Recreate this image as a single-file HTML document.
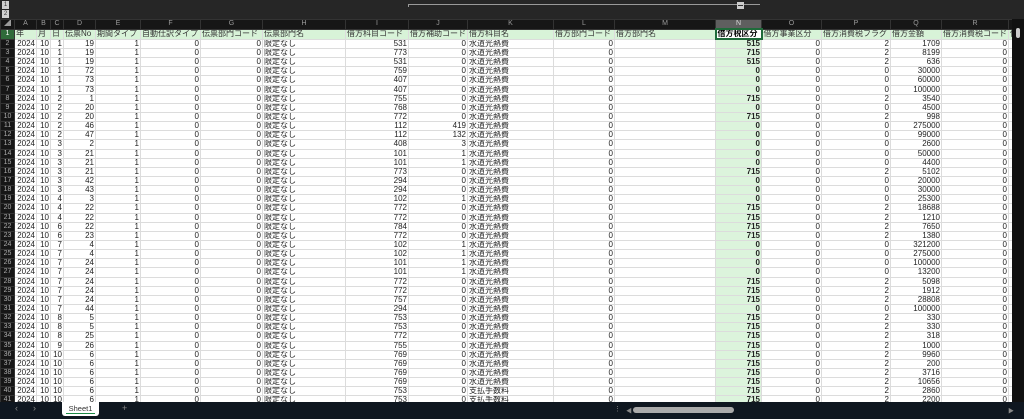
<!DOCTYPE html>
<html><head><meta charset="utf-8"><style>
*{margin:0;padding:0;box-sizing:border-box}
body{width:1024px;height:419px;overflow:hidden;background:#1f1f1f;font-family:"Liberation Sans","Noto Sans CJK JP",sans-serif;position:relative}
#top{position:absolute;left:0;top:0;width:1024px;height:19px;background:#262626}
.ob{position:absolute;left:2px;width:7px;height:8px;background:#d0d0d0;color:#333;font-size:6px;line-height:8px;text-align:center}
#line{position:absolute;left:408px;top:4px;width:352px;height:1px;background:#999}
#line2{position:absolute;left:408px;top:4px;width:1px;height:3px;background:#999}
#minus{position:absolute;left:737px;top:2px;width:7px;height:7px;background:#ccc}
#minus:after{content:"";position:absolute;left:1px;top:3px;width:5px;height:1px;background:#333}
table{position:absolute;left:0;top:19px;border-collapse:collapse;table-layout:fixed;width:1012px;font-size:8px}
td,th{border:1px solid #dcdcdc;padding:0 1px;white-space:nowrap;overflow:hidden;line-height:8px;text-align:right;color:#222;background:#fff;font-weight:normal}
tr{height:9.15px}
tr.h{height:8.5px}
tr.h th{background:#161616;color:#9a9a9a;text-align:center;border-color:#333;font-size:7px}
tr.h th.sel{background:#5f5f5f;color:#ddd}
th.r{background:#161616;color:#aaa;text-align:center;border-color:#333;font-size:7px;padding:0}
tr.f td{background:#d8f3d8;color:#333;text-align:left}
tr.f th.r{background:#2f6b3a;color:#fff}
td.l{text-align:left}
td.n{background:#dcf4dc;font-weight:bold}
tr.f td.n{background:#fff;border:2px solid #1f6b3a;font-weight:bold;color:#000}
#vs{position:absolute;left:1012px;top:19px;width:12px;height:384px;background:#111}
#vs:before{content:"";position:absolute;left:4px;top:9px;width:4px;height:10px;border-radius:2px;background:#ccc}
#bar{position:absolute;left:0;top:402px;width:1024px;height:17px;background:#0f1720}
#tab{position:absolute;left:62px;top:402px;width:37px;height:14px;background:#fff;border-radius:0 0 3px 3px;font-size:7.5px;color:#333;text-align:center;line-height:13px}
#tab:after{content:"";position:absolute;left:4px;right:4px;bottom:2px;height:1px;background:#1d8a45}
.g{position:absolute;color:#888;font-size:9px;top:403px}
#thumb{position:absolute;left:633px;top:407px;width:101px;height:6px;border-radius:3px;background:#aaa}
</style></head><body>
<div id="top"><div class="ob" style="top:1px">1</div><div class="ob" style="top:10px">2</div><div id="line"></div><div id="line2"></div><div id="minus"></div></div>
<table>
<colgroup><col style="width:14px"><col style="width:22px"><col style="width:14px"><col style="width:13px"><col style="width:32px"><col style="width:45px"><col style="width:60px"><col style="width:62px"><col style="width:83px"><col style="width:63px"><col style="width:59px"><col style="width:86px"><col style="width:61px"><col style="width:101px"><col style="width:46px"><col style="width:60px"><col style="width:69px"><col style="width:51px"><col style="width:67px"><col style="width:4px"></colgroup>
<tr class="h"><th>◢</th><th>A</th><th>B</th><th>C</th><th>D</th><th>E</th><th>F</th><th>G</th><th>H</th><th>I</th><th>J</th><th>K</th><th>L</th><th>M</th><th class="sel">N</th><th>O</th><th>P</th><th>Q</th><th>R</th><th></th></tr>
<tr class="f"><th class="r">1</th><td>年</td><td>月</td><td>日</td><td>伝票No</td><td>期間タイプ</td><td>自動仕訳タイプ</td><td>伝票部門コード</td><td>伝票部門名</td><td>借方科目コード</td><td>借方補助コード</td><td>借方科目名</td><td>借方部門コード</td><td>借方部門名</td><td class="n">借方税区分</td><td>借方事業区分</td><td>借方消費税フラグ</td><td>借方金額</td><td>借方消費税コード</td><td>借</td></tr>
<tr><th class="r">2</th><td>2024</td><td>10</td><td>1</td><td>19</td><td>1</td><td>0</td><td>0</td><td class="l">限定なし</td><td>531</td><td>0</td><td class="l">水道光熱費</td><td>0</td><td></td><td class="n">515</td><td>0</td><td>2</td><td>1709</td><td>0</td><td></td></tr>
<tr><th class="r">3</th><td>2024</td><td>10</td><td>1</td><td>19</td><td>1</td><td>0</td><td>0</td><td class="l">限定なし</td><td>773</td><td>0</td><td class="l">水道光熱費</td><td>0</td><td></td><td class="n">715</td><td>0</td><td>2</td><td>8199</td><td>0</td><td></td></tr>
<tr><th class="r">4</th><td>2024</td><td>10</td><td>1</td><td>19</td><td>1</td><td>0</td><td>0</td><td class="l">限定なし</td><td>531</td><td>0</td><td class="l">水道光熱費</td><td>0</td><td></td><td class="n">515</td><td>0</td><td>2</td><td>636</td><td>0</td><td></td></tr>
<tr><th class="r">5</th><td>2024</td><td>10</td><td>1</td><td>72</td><td>1</td><td>0</td><td>0</td><td class="l">限定なし</td><td>759</td><td>0</td><td class="l">水道光熱費</td><td>0</td><td></td><td class="n">0</td><td>0</td><td>0</td><td>30000</td><td>0</td><td></td></tr>
<tr><th class="r">6</th><td>2024</td><td>10</td><td>1</td><td>73</td><td>1</td><td>0</td><td>0</td><td class="l">限定なし</td><td>407</td><td>0</td><td class="l">水道光熱費</td><td>0</td><td></td><td class="n">0</td><td>0</td><td>0</td><td>60000</td><td>0</td><td></td></tr>
<tr><th class="r">7</th><td>2024</td><td>10</td><td>1</td><td>73</td><td>1</td><td>0</td><td>0</td><td class="l">限定なし</td><td>407</td><td>0</td><td class="l">水道光熱費</td><td>0</td><td></td><td class="n">0</td><td>0</td><td>0</td><td>100000</td><td>0</td><td></td></tr>
<tr><th class="r">8</th><td>2024</td><td>10</td><td>2</td><td>1</td><td>1</td><td>0</td><td>0</td><td class="l">限定なし</td><td>755</td><td>0</td><td class="l">水道光熱費</td><td>0</td><td></td><td class="n">715</td><td>0</td><td>2</td><td>3540</td><td>0</td><td></td></tr>
<tr><th class="r">9</th><td>2024</td><td>10</td><td>2</td><td>20</td><td>1</td><td>0</td><td>0</td><td class="l">限定なし</td><td>768</td><td>0</td><td class="l">水道光熱費</td><td>0</td><td></td><td class="n">0</td><td>0</td><td>0</td><td>4500</td><td>0</td><td></td></tr>
<tr><th class="r">10</th><td>2024</td><td>10</td><td>2</td><td>20</td><td>1</td><td>0</td><td>0</td><td class="l">限定なし</td><td>772</td><td>0</td><td class="l">水道光熱費</td><td>0</td><td></td><td class="n">715</td><td>0</td><td>2</td><td>998</td><td>0</td><td></td></tr>
<tr><th class="r">11</th><td>2024</td><td>10</td><td>2</td><td>46</td><td>1</td><td>0</td><td>0</td><td class="l">限定なし</td><td>112</td><td>419</td><td class="l">水道光熱費</td><td>0</td><td></td><td class="n">0</td><td>0</td><td>0</td><td>275000</td><td>0</td><td></td></tr>
<tr><th class="r">12</th><td>2024</td><td>10</td><td>2</td><td>47</td><td>1</td><td>0</td><td>0</td><td class="l">限定なし</td><td>112</td><td>132</td><td class="l">水道光熱費</td><td>0</td><td></td><td class="n">0</td><td>0</td><td>0</td><td>99000</td><td>0</td><td></td></tr>
<tr><th class="r">13</th><td>2024</td><td>10</td><td>3</td><td>2</td><td>1</td><td>0</td><td>0</td><td class="l">限定なし</td><td>408</td><td>3</td><td class="l">水道光熱費</td><td>0</td><td></td><td class="n">0</td><td>0</td><td>0</td><td>2600</td><td>0</td><td></td></tr>
<tr><th class="r">14</th><td>2024</td><td>10</td><td>3</td><td>21</td><td>1</td><td>0</td><td>0</td><td class="l">限定なし</td><td>101</td><td>1</td><td class="l">水道光熱費</td><td>0</td><td></td><td class="n">0</td><td>0</td><td>0</td><td>50000</td><td>0</td><td></td></tr>
<tr><th class="r">15</th><td>2024</td><td>10</td><td>3</td><td>21</td><td>1</td><td>0</td><td>0</td><td class="l">限定なし</td><td>101</td><td>1</td><td class="l">水道光熱費</td><td>0</td><td></td><td class="n">0</td><td>0</td><td>0</td><td>4400</td><td>0</td><td></td></tr>
<tr><th class="r">16</th><td>2024</td><td>10</td><td>3</td><td>21</td><td>1</td><td>0</td><td>0</td><td class="l">限定なし</td><td>773</td><td>0</td><td class="l">水道光熱費</td><td>0</td><td></td><td class="n">715</td><td>0</td><td>2</td><td>5102</td><td>0</td><td></td></tr>
<tr><th class="r">17</th><td>2024</td><td>10</td><td>3</td><td>42</td><td>1</td><td>0</td><td>0</td><td class="l">限定なし</td><td>294</td><td>0</td><td class="l">水道光熱費</td><td>0</td><td></td><td class="n">0</td><td>0</td><td>0</td><td>20000</td><td>0</td><td></td></tr>
<tr><th class="r">18</th><td>2024</td><td>10</td><td>3</td><td>43</td><td>1</td><td>0</td><td>0</td><td class="l">限定なし</td><td>294</td><td>0</td><td class="l">水道光熱費</td><td>0</td><td></td><td class="n">0</td><td>0</td><td>0</td><td>30000</td><td>0</td><td></td></tr>
<tr><th class="r">19</th><td>2024</td><td>10</td><td>4</td><td>3</td><td>1</td><td>0</td><td>0</td><td class="l">限定なし</td><td>102</td><td>1</td><td class="l">水道光熱費</td><td>0</td><td></td><td class="n">0</td><td>0</td><td>0</td><td>25300</td><td>0</td><td></td></tr>
<tr><th class="r">20</th><td>2024</td><td>10</td><td>4</td><td>22</td><td>1</td><td>0</td><td>0</td><td class="l">限定なし</td><td>772</td><td>0</td><td class="l">水道光熱費</td><td>0</td><td></td><td class="n">715</td><td>0</td><td>2</td><td>18688</td><td>0</td><td></td></tr>
<tr><th class="r">21</th><td>2024</td><td>10</td><td>4</td><td>22</td><td>1</td><td>0</td><td>0</td><td class="l">限定なし</td><td>772</td><td>0</td><td class="l">水道光熱費</td><td>0</td><td></td><td class="n">715</td><td>0</td><td>2</td><td>1210</td><td>0</td><td></td></tr>
<tr><th class="r">22</th><td>2024</td><td>10</td><td>6</td><td>22</td><td>1</td><td>0</td><td>0</td><td class="l">限定なし</td><td>784</td><td>0</td><td class="l">水道光熱費</td><td>0</td><td></td><td class="n">715</td><td>0</td><td>2</td><td>7650</td><td>0</td><td></td></tr>
<tr><th class="r">23</th><td>2024</td><td>10</td><td>6</td><td>23</td><td>1</td><td>0</td><td>0</td><td class="l">限定なし</td><td>772</td><td>0</td><td class="l">水道光熱費</td><td>0</td><td></td><td class="n">715</td><td>0</td><td>2</td><td>1380</td><td>0</td><td></td></tr>
<tr><th class="r">24</th><td>2024</td><td>10</td><td>7</td><td>4</td><td>1</td><td>0</td><td>0</td><td class="l">限定なし</td><td>102</td><td>1</td><td class="l">水道光熱費</td><td>0</td><td></td><td class="n">0</td><td>0</td><td>0</td><td>321200</td><td>0</td><td></td></tr>
<tr><th class="r">25</th><td>2024</td><td>10</td><td>7</td><td>4</td><td>1</td><td>0</td><td>0</td><td class="l">限定なし</td><td>102</td><td>1</td><td class="l">水道光熱費</td><td>0</td><td></td><td class="n">0</td><td>0</td><td>0</td><td>275000</td><td>0</td><td></td></tr>
<tr><th class="r">26</th><td>2024</td><td>10</td><td>7</td><td>24</td><td>1</td><td>0</td><td>0</td><td class="l">限定なし</td><td>101</td><td>1</td><td class="l">水道光熱費</td><td>0</td><td></td><td class="n">0</td><td>0</td><td>0</td><td>100000</td><td>0</td><td></td></tr>
<tr><th class="r">27</th><td>2024</td><td>10</td><td>7</td><td>24</td><td>1</td><td>0</td><td>0</td><td class="l">限定なし</td><td>101</td><td>1</td><td class="l">水道光熱費</td><td>0</td><td></td><td class="n">0</td><td>0</td><td>0</td><td>13200</td><td>0</td><td></td></tr>
<tr><th class="r">28</th><td>2024</td><td>10</td><td>7</td><td>24</td><td>1</td><td>0</td><td>0</td><td class="l">限定なし</td><td>772</td><td>0</td><td class="l">水道光熱費</td><td>0</td><td></td><td class="n">715</td><td>0</td><td>2</td><td>5098</td><td>0</td><td></td></tr>
<tr><th class="r">29</th><td>2024</td><td>10</td><td>7</td><td>24</td><td>1</td><td>0</td><td>0</td><td class="l">限定なし</td><td>772</td><td>0</td><td class="l">水道光熱費</td><td>0</td><td></td><td class="n">715</td><td>0</td><td>2</td><td>1912</td><td>0</td><td></td></tr>
<tr><th class="r">30</th><td>2024</td><td>10</td><td>7</td><td>24</td><td>1</td><td>0</td><td>0</td><td class="l">限定なし</td><td>757</td><td>0</td><td class="l">水道光熱費</td><td>0</td><td></td><td class="n">715</td><td>0</td><td>2</td><td>28808</td><td>0</td><td></td></tr>
<tr><th class="r">31</th><td>2024</td><td>10</td><td>7</td><td>44</td><td>1</td><td>0</td><td>0</td><td class="l">限定なし</td><td>294</td><td>0</td><td class="l">水道光熱費</td><td>0</td><td></td><td class="n">0</td><td>0</td><td>0</td><td>100000</td><td>0</td><td></td></tr>
<tr><th class="r">32</th><td>2024</td><td>10</td><td>8</td><td>5</td><td>1</td><td>0</td><td>0</td><td class="l">限定なし</td><td>753</td><td>0</td><td class="l">水道光熱費</td><td>0</td><td></td><td class="n">715</td><td>0</td><td>2</td><td>330</td><td>0</td><td></td></tr>
<tr><th class="r">33</th><td>2024</td><td>10</td><td>8</td><td>5</td><td>1</td><td>0</td><td>0</td><td class="l">限定なし</td><td>753</td><td>0</td><td class="l">水道光熱費</td><td>0</td><td></td><td class="n">715</td><td>0</td><td>2</td><td>330</td><td>0</td><td></td></tr>
<tr><th class="r">34</th><td>2024</td><td>10</td><td>8</td><td>25</td><td>1</td><td>0</td><td>0</td><td class="l">限定なし</td><td>772</td><td>0</td><td class="l">水道光熱費</td><td>0</td><td></td><td class="n">715</td><td>0</td><td>2</td><td>318</td><td>0</td><td></td></tr>
<tr><th class="r">35</th><td>2024</td><td>10</td><td>9</td><td>26</td><td>1</td><td>0</td><td>0</td><td class="l">限定なし</td><td>755</td><td>0</td><td class="l">水道光熱費</td><td>0</td><td></td><td class="n">715</td><td>0</td><td>2</td><td>1000</td><td>0</td><td></td></tr>
<tr><th class="r">36</th><td>2024</td><td>10</td><td>10</td><td>6</td><td>1</td><td>0</td><td>0</td><td class="l">限定なし</td><td>769</td><td>0</td><td class="l">水道光熱費</td><td>0</td><td></td><td class="n">715</td><td>0</td><td>2</td><td>9960</td><td>0</td><td></td></tr>
<tr><th class="r">37</th><td>2024</td><td>10</td><td>10</td><td>6</td><td>1</td><td>0</td><td>0</td><td class="l">限定なし</td><td>769</td><td>0</td><td class="l">水道光熱費</td><td>0</td><td></td><td class="n">715</td><td>0</td><td>2</td><td>200</td><td>0</td><td></td></tr>
<tr><th class="r">38</th><td>2024</td><td>10</td><td>10</td><td>6</td><td>1</td><td>0</td><td>0</td><td class="l">限定なし</td><td>769</td><td>0</td><td class="l">水道光熱費</td><td>0</td><td></td><td class="n">715</td><td>0</td><td>2</td><td>3716</td><td>0</td><td></td></tr>
<tr><th class="r">39</th><td>2024</td><td>10</td><td>10</td><td>6</td><td>1</td><td>0</td><td>0</td><td class="l">限定なし</td><td>769</td><td>0</td><td class="l">水道光熱費</td><td>0</td><td></td><td class="n">715</td><td>0</td><td>2</td><td>10656</td><td>0</td><td></td></tr>
<tr><th class="r">40</th><td>2024</td><td>10</td><td>10</td><td>6</td><td>1</td><td>0</td><td>0</td><td class="l">限定なし</td><td>753</td><td>0</td><td class="l">支払手数料</td><td>0</td><td></td><td class="n">715</td><td>0</td><td>2</td><td>2860</td><td>0</td><td></td></tr>
<tr><th class="r">41</th><td>2024</td><td>10</td><td>10</td><td>6</td><td>1</td><td>0</td><td>0</td><td class="l">限定なし</td><td>753</td><td>0</td><td class="l">支払手数料</td><td>0</td><td></td><td class="n">715</td><td>0</td><td>2</td><td>2200</td><td>0</td><td></td></tr>
</table>
<div id="vs"></div>
<div id="bar"></div>
<div class="g" style="left:15px">‹</div><div class="g" style="left:33px">›</div>
<div id="tab">Sheet1</div>
<div class="g" style="left:122px">+</div>
<div class="g" style="left:614px;font-size:7px;top:405px">⋮</div>
<div class="g" style="left:626px;font-size:6px;top:406px">◀</div>
<div id="thumb"></div>
<div class="g" style="left:1008px;font-size:6px;top:406px">▶</div>
</body></html>
